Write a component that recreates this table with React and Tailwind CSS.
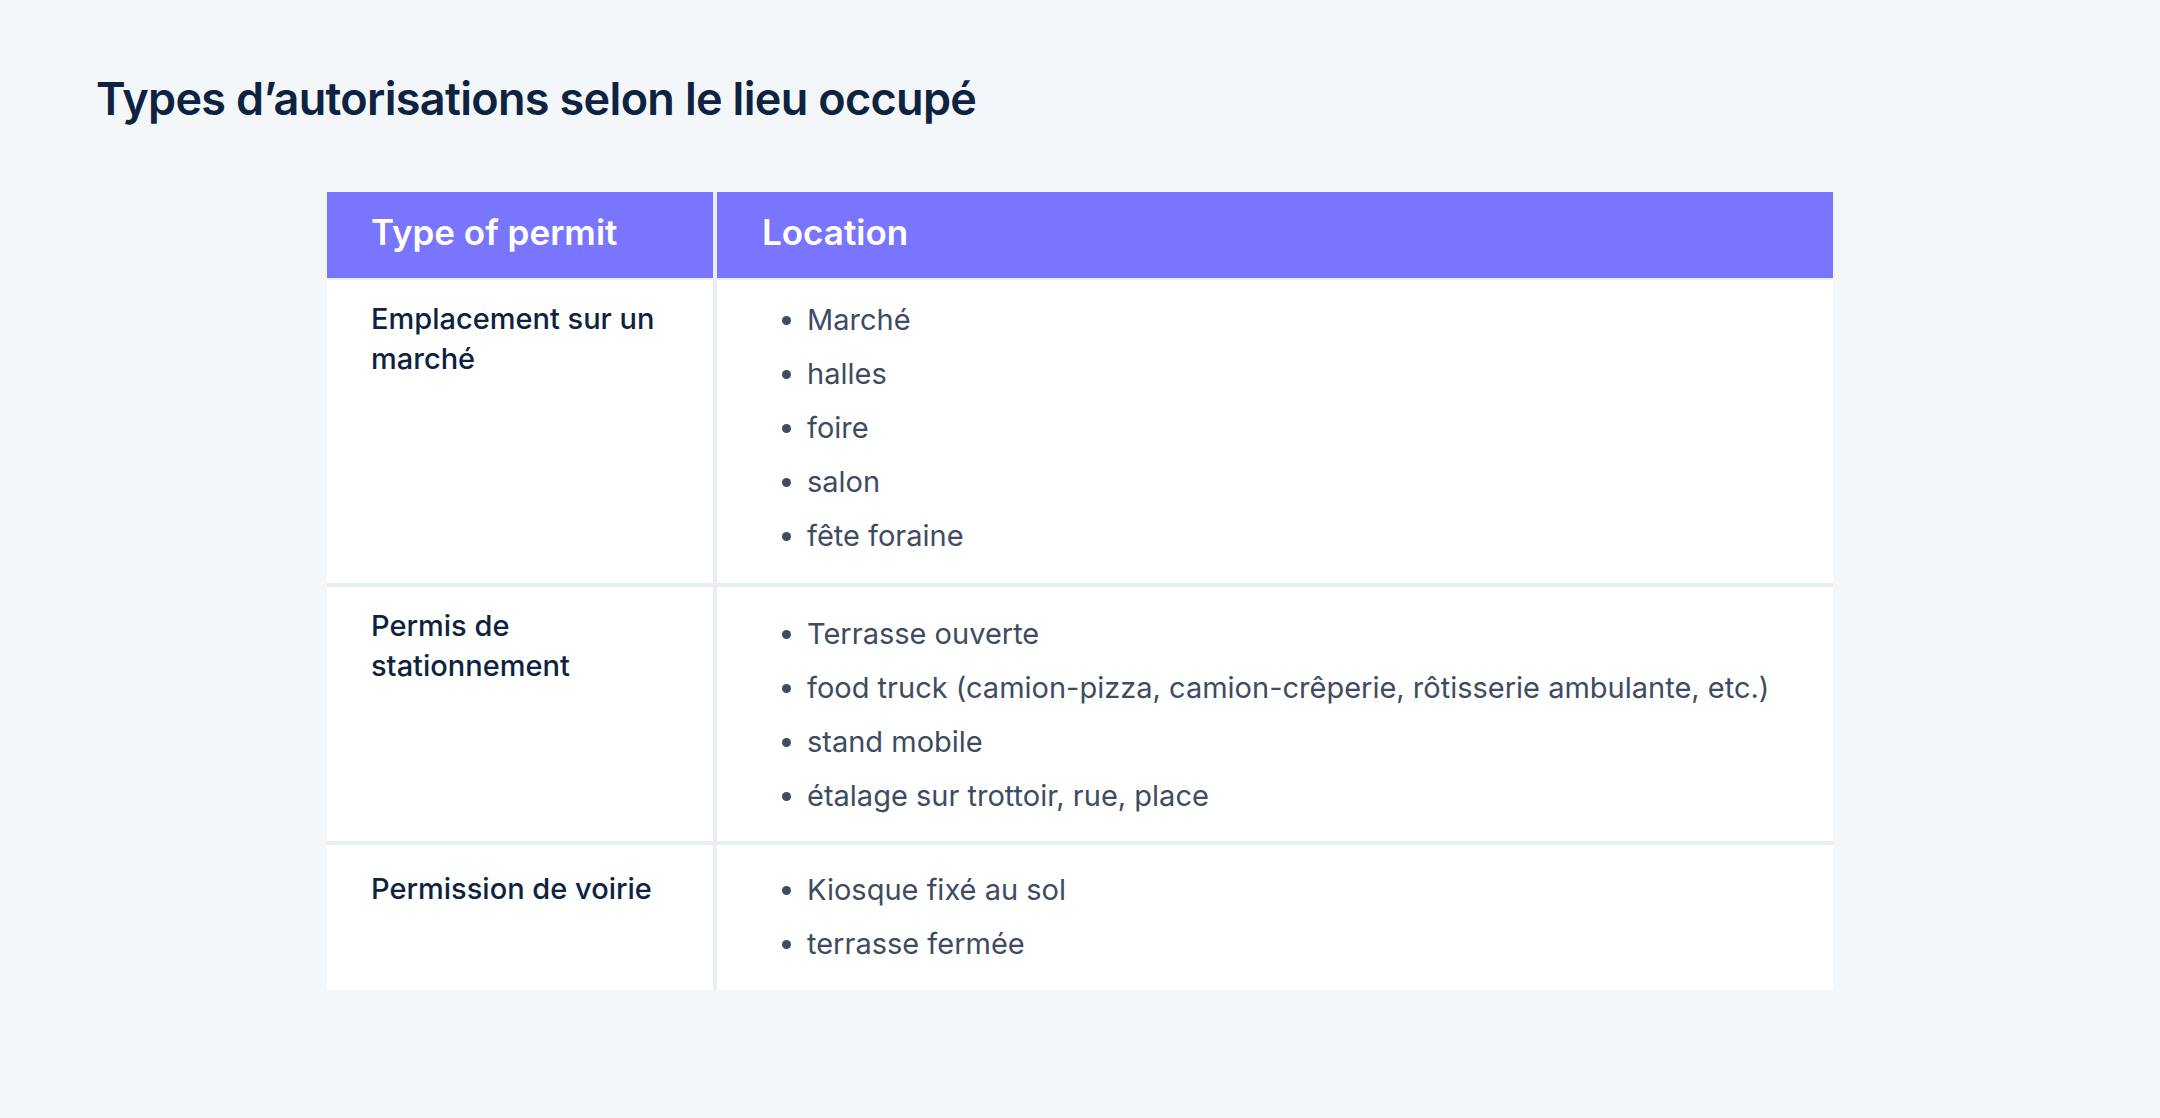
import React from 'react';

const rows = [
  {
    label: ['Emplacement sur un', 'marché'],
    items: ['Marché', 'halles', 'foire', 'salon', 'fête foraine'],
    labelPad: 'pt-[19px]',
    listPad: 'pt-[20px] pb-[27px]',
  },
  {
    label: ['Permis de', 'stationnement'],
    items: [
      'Terrasse ouverte',
      'food truck (camion-pizza, camion-crêperie, rôtisserie ambulante, etc.)',
      'stand mobile',
      'étalage sur trottoir, rue, place',
    ],
    labelPad: 'pt-[19px]',
    listPad: 'pt-[27px] pb-[25px]',
  },
  {
    label: ['Permission de voirie'],
    items: ['Kiosque fixé au sol', 'terrasse fermée'],
    labelPad: 'pt-[24px]',
    listPad: 'pt-[25px] pb-[26px]',
  },
];

export default function App() {
  return (
    <div
      className="min-h-[1118px] bg-[#f4f7fa] px-[96px] pt-[72px]"
      style={{ fontFamily: 'Inter, "Noto Sans", sans-serif' }}
    >
      <h1 className="text-[45px] leading-[54px] font-semibold tracking-[-0.015em] text-[#0e2340]">
        Types d’autorisations selon le lieu occupé
      </h1>

      {/* Table */}
      <div className="mx-auto mt-[66px] w-[1506px] bg-[#e7eef6]">
        <div className="flex h-[86px] gap-[4px]">
          <div className="flex w-[386px] items-center bg-[#7a75ff] pb-[5px] pl-[44px] text-[35px] font-semibold text-white">
            Type of permit
          </div>
          <div className="flex flex-1 items-center bg-[#7a75ff] pb-[5px] pl-[45px] text-[35px] font-semibold text-white">
            Location
          </div>
        </div>

        <div className="mt-[2px] flex flex-col gap-[4px]">
          {rows.map((row, i) => (
            <div key={i} className="flex gap-[4px]">
              <div className={`w-[386px] bg-white pl-[44px] pr-[16px] ${row.labelPad}`}>
                <div className="text-[29px] leading-[40px] font-medium text-[#0e2340]">
                  {row.label.map((l, j) => (
                    <div key={j}>{l}</div>
                  ))}
                </div>
              </div>
              <div className={`flex-1 bg-white pl-[65px] ${row.listPad}`}>
                <ul className="flex flex-col gap-[14px]">
                  {row.items.map((item, j) => (
                    <li key={j} className="flex items-center gap-[16px] text-[29px] leading-[40px] text-[#3e4c62]">
                      <span className="h-[9px] w-[9px] shrink-0 rounded-full bg-[#3e4c62]" />
                      <span>{item}</span>
                    </li>
                  ))}
                </ul>
              </div>
            </div>
          ))}
        </div>
      </div>
    </div>
  );
}
